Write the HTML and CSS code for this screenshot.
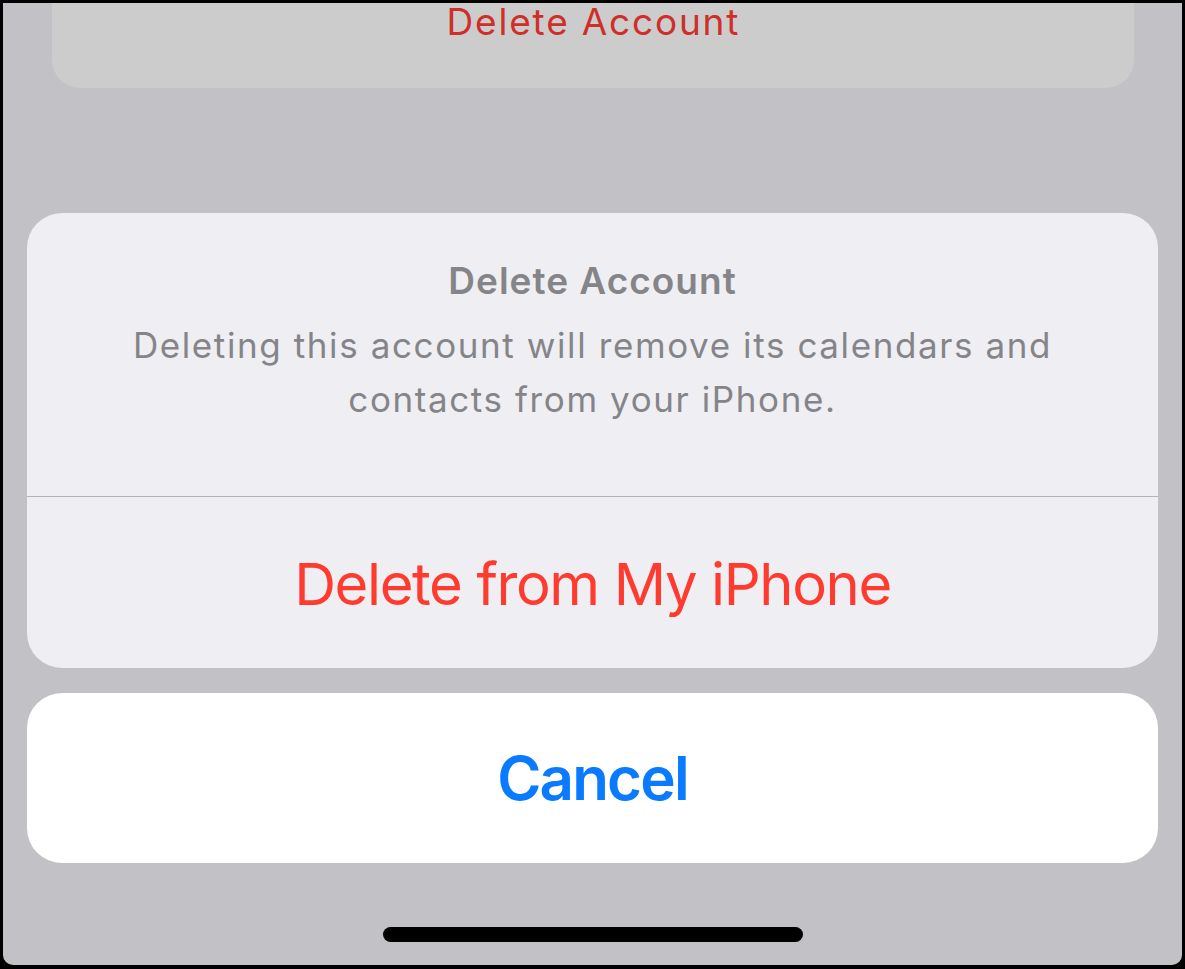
FILE: index.html
```html
<!DOCTYPE html>
<html lang="en">
<head>
<meta charset="utf-8">
<title>Delete Account</title>
<link rel="stylesheet" href="styles.css">
</head>
<body>
<div class="frame">
  <div class="screen">
    <div class="bg-card">
      <span class="bg-action">Delete Account</span>
    </div>
    <div class="sheet">
      <div class="alert">
        <div class="alert-header">
          <div class="alert-title">Delete Account</div>
          <div class="alert-message">Deleting this account will remove its calendars and contacts from your iPhone.</div>
        </div>
        <div class="alert-button destructive">Delete from My iPhone</div>
      </div>
      <div class="cancel">Cancel</div>
    </div>
    <div class="home-indicator"></div>
  </div>
</div>
</body>
</html>
```

FILE: styles.css
```css
html, body {
  margin: 0;
  padding: 0;
  background: #000;
}
body {
  width: 1185px;
  height: 969px;
  overflow: hidden;
  font-family: Inter, "Liberation Sans", sans-serif;
}
.frame {
  padding: 3px 3px 4px 3px;
  height: 969px;
  box-sizing: border-box;
}
.screen {
  height: 962px;
  background: #c2c1c6;
  border-radius: 0 0 10px 10px;
  display: flex;
  flex-direction: column;
  align-items: center;
}
.bg-card {
  width: 1082px;
  height: 85px;
  background: #cccccc;
  border-radius: 0 0 28px 28px;
  display: flex;
  justify-content: center;
}
.bg-action {
  color: #cf2f28;
  font-size: 37px;
  letter-spacing: 1.8px;
  line-height: 40px;
  margin-top: -1px;
  margin-right: -1.8px;
}
.sheet {
  margin-top: 125px;
  width: 1131px;
  display: flex;
  flex-direction: column;
  gap: 25px;
}
.alert {
  background: #efeff3;
  border-radius: 35px;
  overflow: hidden;
}
.alert-header {
  height: 284px;
  box-sizing: border-box;
  border-bottom: 1px solid #b3b3b6;
  padding-top: 46px;
  text-align: center;
}
.alert-title {
  color: #858589;
  font-size: 37px;
  font-weight: 600;
  letter-spacing: 1px;
  line-height: 44px;
}
.alert-message {
  color: #858589;
  font-size: 35px;
  letter-spacing: 1.6px;
  line-height: 54px;
  margin: 15px auto 0;
  width: 960px;
}
.alert-button {
  height: 171px;
  display: flex;
  align-items: center;
  justify-content: center;
  font-size: 58px;
  letter-spacing: -1.4px;
  padding-top: 3px;
  box-sizing: border-box;
}
.destructive {
  color: #ff3b30;
}
.cancel {
  height: 170px;
  background: #fff;
  border-radius: 35px;
  display: flex;
  align-items: center;
  justify-content: center;
  color: #0a7aff;
  font-size: 60px;
  font-weight: 600;
  letter-spacing: -1.8px;
}
.home-indicator {
  margin-top: 64px;
  width: 420px;
  height: 15px;
  background: #000;
  border-radius: 8px;
}
```
